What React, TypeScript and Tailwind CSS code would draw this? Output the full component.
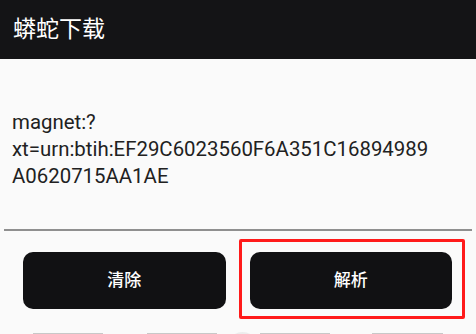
export default function App() {
  return (
    <div
      className="relative w-[476px] h-[334px] overflow-hidden bg-[#fafafa]"
      style={{ fontFamily: 'Roboto, "Noto Sans CJK SC", sans-serif' }}
    >
      {/* Toolbar */}
      <div className="h-[59px] bg-[#141416] flex items-center pl-[13px]">
        <span className="text-white text-[23px] leading-none">蟒蛇下载</span>
      </div>

      {/* Input */}
      <div className="h-[170px] pt-[50px] px-[12px]">
        <p className="text-[#212121] text-[20.4px] leading-[27px] break-all">
          magnet:?
          <br />
          xt=urn:btih:EF29C6023560F6A351C16894989
          <br />
          A0620715AA1AE
        </p>
      </div>
      <div className="mx-[4px] h-[2px] bg-[#8f8f8f]" />

      {/* Actions */}
      <div className="flex gap-[24px] pl-[23px] pr-[24px] mt-[21px]">
        <button className="flex-1 h-[57px] rounded-[10px] bg-[#111113] text-white text-[17px] font-medium">
          清除
        </button>
        <button className="flex-1 h-[57px] rounded-[10px] bg-[#111113] text-white text-[17px] font-medium">
          解析
        </button>
      </div>

      {/* Next row, cut off */}
      <div className="flex items-start mt-[24px] pl-[33px]">
        <div className="w-[70px] h-[20px] border-t border-[#c8c8c8]" />
        <div className="w-[70px] h-[20px] border-t border-[#c8c8c8] ml-[44px]" />
        <div className="w-[31px] h-[31px] rounded-full bg-[#ececec] ml-[10px] -mt-[1px]" />
        <div className="w-[70px] h-[20px] border-t border-[#c8c8c8] ml-[2px]" />
        <div className="w-[71px] h-[20px] border-t border-[#c8c8c8] ml-[42px]" />
      </div>

      {/* Highlight */}
      <div className="absolute left-[239px] top-[239px] w-[226px] h-[80px] border-[3px] border-[#ff1a1a] rounded-[2px]" />
    </div>
  );
}
